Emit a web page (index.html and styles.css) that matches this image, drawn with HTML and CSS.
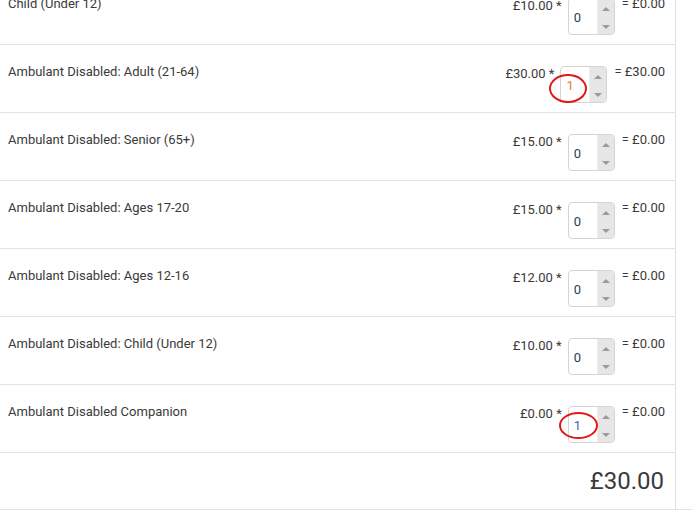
FILE: index.html
```html
<!DOCTYPE html>
<html lang="en">
<head>
  <meta charset="UTF-8">
  <title>Tickets</title>
  <link rel="stylesheet" href="styles.css">
</head>
<body>
  <div class="tickets">
    <div class="ticket-row">
      <div class="ticket-name">Child (Under 12)</div>
      <div class="ticket-qty">
        <span class="price">£10.00 *</span>
        <div class="spinner"><span class="val">0</span><span class="spin"><i class="up"></i><i class="down"></i></span></div>
        <span class="subtotal">= £0.00</span>
      </div>
    </div>
    <div class="ticket-row">
      <div class="ticket-name">Ambulant Disabled: Adult (21-64)</div>
      <div class="ticket-qty">
        <span class="price">£30.00 *</span>
        <div class="spinner"><span class="val val-orange">1</span><span class="spin"><i class="up"></i><i class="down"></i></span><span class="ring ring-a"></span></div>
        <span class="subtotal">= £30.00</span>
      </div>
    </div>
    <div class="ticket-row">
      <div class="ticket-name">Ambulant Disabled: Senior (65+)</div>
      <div class="ticket-qty">
        <span class="price">£15.00 *</span>
        <div class="spinner"><span class="val">0</span><span class="spin"><i class="up"></i><i class="down"></i></span></div>
        <span class="subtotal">= £0.00</span>
      </div>
    </div>
    <div class="ticket-row">
      <div class="ticket-name">Ambulant Disabled: Ages 17-20</div>
      <div class="ticket-qty">
        <span class="price">£15.00 *</span>
        <div class="spinner"><span class="val">0</span><span class="spin"><i class="up"></i><i class="down"></i></span></div>
        <span class="subtotal">= £0.00</span>
      </div>
    </div>
    <div class="ticket-row">
      <div class="ticket-name">Ambulant Disabled: Ages 12-16</div>
      <div class="ticket-qty">
        <span class="price">£12.00 *</span>
        <div class="spinner"><span class="val">0</span><span class="spin"><i class="up"></i><i class="down"></i></span></div>
        <span class="subtotal">= £0.00</span>
      </div>
    </div>
    <div class="ticket-row">
      <div class="ticket-name">Ambulant Disabled: Child (Under 12)</div>
      <div class="ticket-qty">
        <span class="price">£10.00 *</span>
        <div class="spinner"><span class="val">0</span><span class="spin"><i class="up"></i><i class="down"></i></span></div>
        <span class="subtotal">= £0.00</span>
      </div>
    </div>
    <div class="ticket-row">
      <div class="ticket-name">Ambulant Disabled Companion</div>
      <div class="ticket-qty">
        <span class="price">£0.00 *</span>
        <div class="spinner"><span class="val val-blue">1</span><span class="spin"><i class="up"></i><i class="down"></i></span><span class="ring ring-b"></span></div>
        <span class="subtotal">= £0.00</span>
      </div>
    </div>
    <div class="total-row">£30.00</div>
  </div>
  <div class="bottom-line"></div>
</body>
</html>
```

FILE: styles.css
```css
body {
  margin: 0;
  font-family: Roboto, "Liberation Sans", sans-serif;
  font-size: 13px;
  color: #3a3a3a;
  background: #fff;
  overflow: hidden;
}
.tickets {
  width: 676px;
  margin-top: -23px;
  border-right: 1px solid #e0e0e0;
  box-sizing: border-box;
}
.ticket-row {
  display: flex;
  justify-content: space-between;
  align-items: flex-start;
  height: 68px;
  box-sizing: border-box;
  padding: 18px 10px 0 8px;
  border-bottom: 1px solid #e3e3e3;
  line-height: 18px;
}
.ticket-qty {
  display: flex;
  align-items: flex-start;
}
.price {
  margin-top: 2px;
  margin-right: 6px;
}
.spinner {
  position: relative;
  display: flex;
  width: 47px;
  height: 37px;
  margin-top: 3px;
  border: 1px solid #d4d4d4;
  border-radius: 4px;
  box-sizing: border-box;
  overflow: visible;
}
.val {
  flex: 1;
  padding-left: 5px;
  line-height: 37px;
  color: #2d3b55;
}
.val-orange {
  color: #d2882e;
}
.val-blue {
  color: #3a62b8;
}
.spin {
  display: flex;
  flex-direction: column;
  justify-content: space-between;
  align-items: center;
  width: 17px;
  padding: 8px 0 5px;
  box-sizing: border-box;
  background: #e6e6e6;
  border-left: 1px solid #ececec;
  border-radius: 0 3px 3px 0;
}
.spin i {
  width: 0;
  height: 0;
  border-left: 4px solid transparent;
  border-right: 4px solid transparent;
}
.spin .up {
  border-bottom: 4px solid #9a9a9a;
}
.spin .down {
  border-top: 4px solid #9a9a9a;
}
.subtotal {
  margin-left: 7px;
}
.ring {
  position: absolute;
  border: 2px solid #e01818;
  border-radius: 50%;
  box-sizing: border-box;
}
.ring-a {
  left: -12px;
  top: 7px;
  width: 38px;
  height: 29px;
}
.ring-b {
  left: -10px;
  top: 5px;
  width: 39px;
  height: 27px;
}
.total-row {
  height: 56px;
  box-sizing: border-box;
  padding: 12px 11px 0 0;
  text-align: right;
  font-size: 24px;
  line-height: 32px;
  color: #3a3a3a;
}
.bottom-line {
  height: 1px;
  background: #e3e3e3;
}
```
